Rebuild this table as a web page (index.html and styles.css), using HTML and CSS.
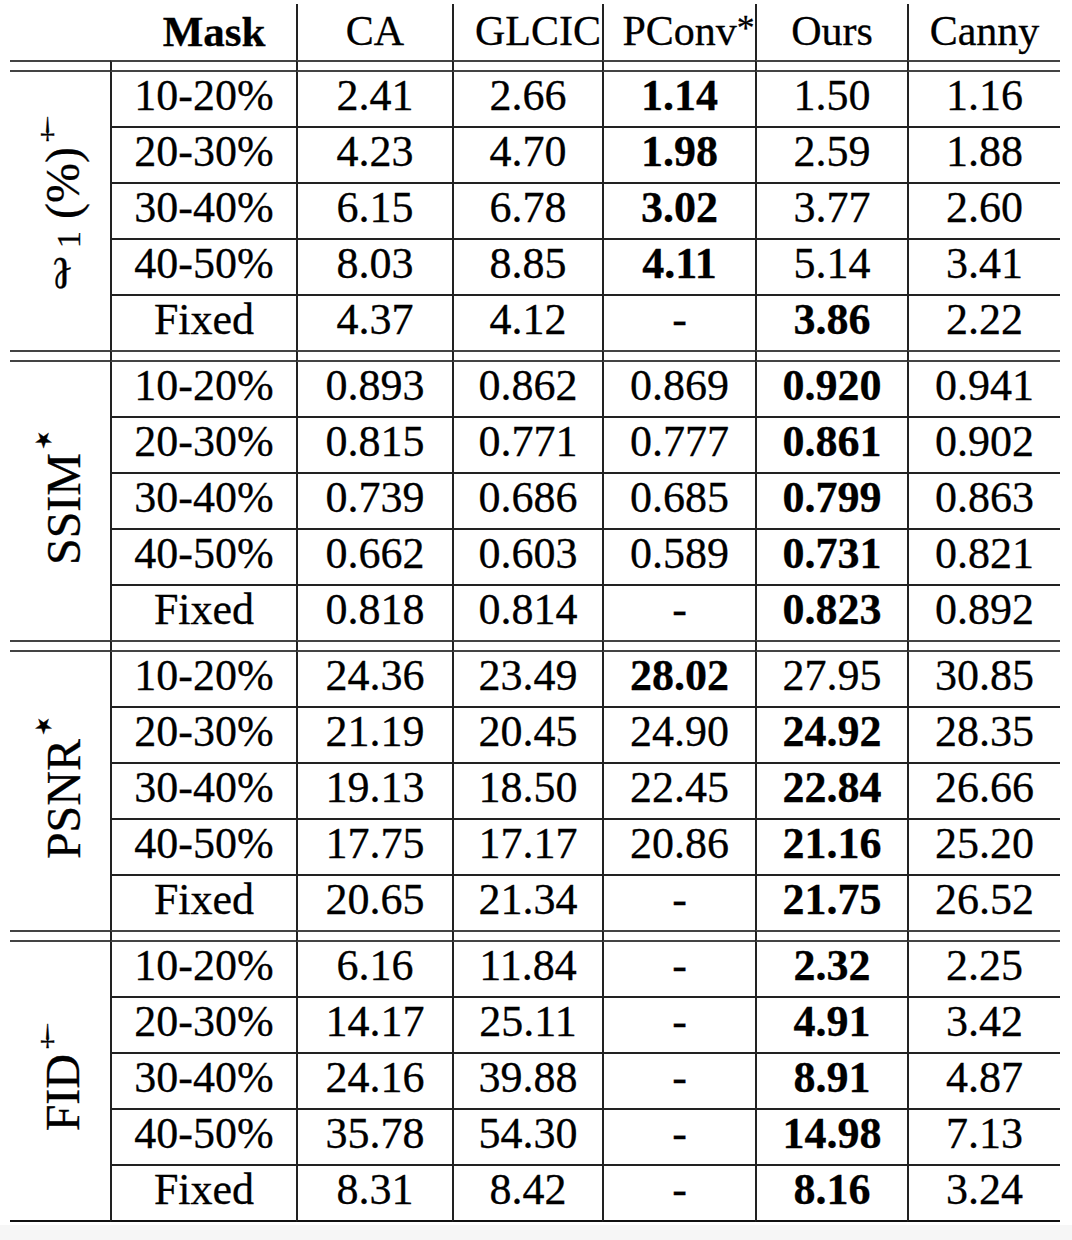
FILE: index.html
```html
<!DOCTYPE html>
<html lang="en">
<head>
<meta charset="utf-8">
<title>Inpainting results</title>
<link rel="stylesheet" href="styles.css">
</head>
<body>
<div class="page">
  <div class="tbl" role="table">
    <div class="row head">
      <div class="h"></div>
      <div class="h mask">Mask</div>
      <div class="h v">CA</div>
      <div class="h v sh">GLCIC</div>
      <div class="h v sh2">PConv<span class="ast">*</span></div>
      <div class="h v">Ours</div>
      <div class="h v">Canny</div>
    </div>

    <div class="row sep"><div></div><div></div><div></div><div></div><div></div><div></div><div></div></div>
    <div class="lab"><span class="vt"><span class="ell">ℓ</span><sub>1</sub> (%)<sup>†</sup></span></div>
    <div class="row ln"><div class="c">10-20%</div><div class="c">2.41</div><div class="c">2.66</div><div class="c bd">1.14</div><div class="c">1.50</div><div class="c">1.16</div></div>
    <div class="row ln"><div class="c">20-30%</div><div class="c">4.23</div><div class="c">4.70</div><div class="c bd">1.98</div><div class="c">2.59</div><div class="c">1.88</div></div>
    <div class="row ln"><div class="c">30-40%</div><div class="c">6.15</div><div class="c">6.78</div><div class="c bd">3.02</div><div class="c">3.77</div><div class="c">2.60</div></div>
    <div class="row ln"><div class="c">40-50%</div><div class="c">8.03</div><div class="c">8.85</div><div class="c bd">4.11</div><div class="c">5.14</div><div class="c">3.41</div></div>
    <div class="row"><div class="c">Fixed</div><div class="c">4.37</div><div class="c">4.12</div><div class="c">-</div><div class="c bd">3.86</div><div class="c">2.22</div></div>

    <div class="row sep"><div></div><div></div><div></div><div></div><div></div><div></div><div></div></div>
    <div class="lab"><span class="vt">SSIM<sup class="star">★</sup></span></div>
    <div class="row ln"><div class="c">10-20%</div><div class="c">0.893</div><div class="c">0.862</div><div class="c">0.869</div><div class="c bd">0.920</div><div class="c">0.941</div></div>
    <div class="row ln"><div class="c">20-30%</div><div class="c">0.815</div><div class="c">0.771</div><div class="c">0.777</div><div class="c bd">0.861</div><div class="c">0.902</div></div>
    <div class="row ln"><div class="c">30-40%</div><div class="c">0.739</div><div class="c">0.686</div><div class="c">0.685</div><div class="c bd">0.799</div><div class="c">0.863</div></div>
    <div class="row ln"><div class="c">40-50%</div><div class="c">0.662</div><div class="c">0.603</div><div class="c">0.589</div><div class="c bd">0.731</div><div class="c">0.821</div></div>
    <div class="row"><div class="c">Fixed</div><div class="c">0.818</div><div class="c">0.814</div><div class="c">-</div><div class="c bd">0.823</div><div class="c">0.892</div></div>

    <div class="row sep"><div></div><div></div><div></div><div></div><div></div><div></div><div></div></div>
    <div class="lab"><span class="vt">PSNR<sup class="star">★</sup></span></div>
    <div class="row ln"><div class="c">10-20%</div><div class="c">24.36</div><div class="c">23.49</div><div class="c bd">28.02</div><div class="c">27.95</div><div class="c">30.85</div></div>
    <div class="row ln"><div class="c">20-30%</div><div class="c">21.19</div><div class="c">20.45</div><div class="c">24.90</div><div class="c bd">24.92</div><div class="c">28.35</div></div>
    <div class="row ln"><div class="c">30-40%</div><div class="c">19.13</div><div class="c">18.50</div><div class="c">22.45</div><div class="c bd">22.84</div><div class="c">26.66</div></div>
    <div class="row ln"><div class="c">40-50%</div><div class="c">17.75</div><div class="c">17.17</div><div class="c">20.86</div><div class="c bd">21.16</div><div class="c">25.20</div></div>
    <div class="row"><div class="c">Fixed</div><div class="c">20.65</div><div class="c">21.34</div><div class="c">-</div><div class="c bd">21.75</div><div class="c">26.52</div></div>

    <div class="row sep"><div></div><div></div><div></div><div></div><div></div><div></div><div></div></div>
    <div class="lab end"><span class="vt">FID<sup>†</sup></span></div>
    <div class="row ln"><div class="c">10-20%</div><div class="c">6.16</div><div class="c">11.84</div><div class="c">-</div><div class="c bd">2.32</div><div class="c">2.25</div></div>
    <div class="row ln"><div class="c">20-30%</div><div class="c">14.17</div><div class="c">25.11</div><div class="c">-</div><div class="c bd">4.91</div><div class="c">3.42</div></div>
    <div class="row ln"><div class="c">30-40%</div><div class="c">24.16</div><div class="c">39.88</div><div class="c">-</div><div class="c bd">8.91</div><div class="c">4.87</div></div>
    <div class="row ln"><div class="c">40-50%</div><div class="c">35.78</div><div class="c">54.30</div><div class="c">-</div><div class="c bd">14.98</div><div class="c">7.13</div></div>
    <div class="row end"><div class="c">Fixed</div><div class="c">8.31</div><div class="c">8.42</div><div class="c">-</div><div class="c bd">8.16</div><div class="c">3.24</div></div>
  </div>
</div>
</body>
</html>
```

FILE: styles.css
```css
* { box-sizing: border-box; }

html { background: #f6f6f6; }

body {
  margin: 0;
  font-family: "Liberation Serif", "DejaVu Serif", serif;
  color: #000;
}

.page {
  background: #fff;
  width: 1072px;
  padding: 4px 12px 3px 10px;
}

.tbl {
  display: grid;
  grid-template-columns: 100px 186px 156px 150px 153px 152px 153px;
  grid-template-rows:
    56px
    12px 56px 56px 56px 56px 54px
    12px 56px 56px 56px 56px 54px
    12px 56px 56px 56px 56px 54px
    12px 56px 56px 56px 56px 56px;
}

.row { display: contents; }

.h {
  display: flex;
  align-items: center;
  justify-content: center;
  font-size: 42px;
  padding-bottom: 2px;
  white-space: nowrap;
  -webkit-text-stroke: 0.3px #000;
}
.h.v { border-left: 2px solid #222; }
.h.mask { font-weight: bold; padding-left: 22px; font-size: 43px; }
.h.sh { padding-left: 20px; }
.h.sh2 { padding-left: 18px; }
.ast { font-size: 0.85em; position: relative; top: -3px; }

.sep > div {
  border-top: 2px solid #444;
  border-bottom: 2px solid #444;
}
.sep > div + div { border-left: 2px solid #222; }

.c {
  display: flex;
  align-items: center;
  justify-content: center;
  border-left: 2px solid #222;
  font-size: 44px;
  padding-bottom: 8px;
  white-space: nowrap;
  -webkit-text-stroke: 0.3px #000;
}
.c.bd { font-weight: bold; }

.ln > .c { border-bottom: 2px solid #222; }
.end > .c { border-bottom: 2px solid #111; }

.lab {
  grid-row: span 5;
  display: flex;
  align-items: center;
  justify-content: center;
  padding-bottom: 8px;
}
.lab.end { border-bottom: 2px solid #111; }

.vt {
  writing-mode: vertical-rl;
  transform: rotate(180deg);
  font-size: 48px;
  line-height: 1;
  white-space: nowrap;
  -webkit-text-stroke: 0.3px #000;
}
.vt sup {
  font-size: 0.62em;
  margin-inline-start: -1px;
  vertical-align: 0.5em;
}
.vt sub { font-size: 0.72em; vertical-align: -0.15em; }
.ell { font-size: 0.95em; }
.vt .star {
  font-family: "DejaVu Sans", sans-serif;
  font-size: 0.44em;
  margin-inline-start: 0;
  vertical-align: 20px;
}
```
